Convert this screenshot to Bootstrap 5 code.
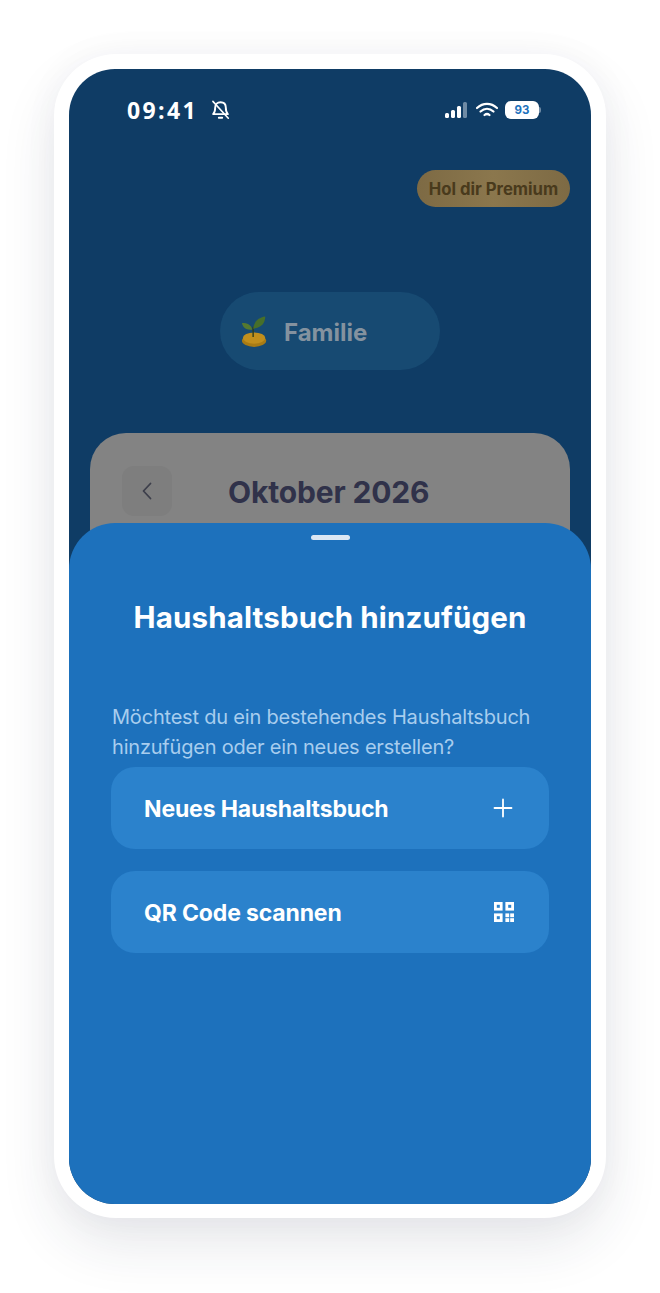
<!DOCTYPE html>
<html lang="de">
<head>
  <meta charset="UTF-8">
  <meta name="viewport" content="width=device-width, initial-scale=1.0">
  <title>Haushaltsbuch hinzufügen</title>
  <link href="https://cdn.jsdelivr.net/npm/bootstrap@5.3.3/dist/css/bootstrap.min.css" rel="stylesheet">
  <style>
    body { background: #fff; font-family: Inter, "Liberation Sans", sans-serif; }
    .stage { width: 660px; height: 1293px; padding: 54px 54px 0; overflow: hidden; }
    .phone {
      width: 552px; height: 1164px; padding: 15px 15px 14px; background: #fff; border-radius: 62px;
      box-shadow: 0 26px 56px rgba(40, 50, 70, .11), 0 0 36px rgba(40, 50, 70, .04);
    }
    .screen { height: 1135px; background: #0f3c65; border-radius: 46px; overflow: hidden; }
    .status-row { height: 84px; padding: 0 50px 2px 58px; color: #fff; }
    .status-left { gap: 13px; }
    .clock { font-family: "Open Sans", sans-serif; font-weight: 700; font-size: 23px; letter-spacing: 2.4px; line-height: 1; }
    .batt { width: 34px; height: 18px; border-radius: 6px; background: #fff; color: #1e72bd; font-size: 11.5px; font-weight: 700; line-height: 18px; text-align: center; }
    .batt-tip { width: 2px; height: 6px; background: #6f8ba5; border-radius: 0 2px 2px 0; }
    .signal { margin-right: 7px; }
    .wifi { margin-right: 6px; }
    .premium-row { padding: 17px 21px 0 0; }
    .premium { height: 37px; width: 153px; border-radius: 19px; font-size: 16.7px; font-weight: 700; color: #493a1c; line-height: 38px; text-align: center; background: linear-gradient(90deg, #7d6a44, #8b774d 50%, #7d6a44); }
    .family-pill { width: 220px; height: 78px; margin-top: 85px; border-radius: 39px; background: #174a72; color: #84929f; font-size: 24px; font-weight: 700; padding-left: 21px; gap: 15px; }
    .family-name { padding-top: 3px; }
    .month-card { height: 300px; margin: 63px 21px 0; border-radius: 36px 36px 0 0; background: #838383; padding: 33px 32px 0; }
    .back-box { width: 50px; height: 50px; border-radius: 12px; background: #7e7e7e; }
    .month-title { font-size: 30px; font-weight: 700; color: #30324a; line-height: 52px; margin-left: 56px; letter-spacing: -.15px; }
    .sheet { left: 0; right: 0; top: 454px; bottom: 0; background: #1d71bc; border-radius: 46px 46px 0 0; padding: 0 42px; }
    .grabber { width: 39px; height: 5px; border-radius: 3px; background: #dbe7f3; margin: 12px auto 0; }
    .sheet-title { font-size: 29.5px; font-weight: 700; color: #fff; margin: 57px 0 0; line-height: 40px; text-align: center; letter-spacing: .15px; white-space: nowrap; }
    .sheet-text { font-size: 20px; font-weight: 400; line-height: 30px; color: #a8cdee; margin: 65px 0 5px; padding-left: 1px; letter-spacing: -.2px; white-space: nowrap; }
    .sheet-btn { height: 82px; border-radius: 24px; background: #2b82cc; color: #fff; font-size: 23px; font-weight: 700; padding: 0 35px 0 33px; letter-spacing: -.15px; }
    .sheet-btn span { padding-top: 2px; }
    .plus-icon { margin-right: 1px; }
    .sheet-stack { gap: 22px; }
  </style>
</head>
<body>
  <div class="stage">
    <div class="phone">
      <div class="screen position-relative">

        <!-- Status bar -->
        <div class="status-row d-flex align-items-center justify-content-between">
          <div class="status-left d-flex align-items-center">
            <span class="clock">09:41</span>
            <svg width="19" height="22" viewBox="0 0 18 20" fill="none" stroke="#fff" stroke-width="1.800" stroke-linecap="round" stroke-linejoin="round">
              <path d="M4 7.500C4 4.500 6 2.600 9 2.600s5 1.900 5 4.900c0 3 .6 5 2 6.400H2c1.400-1.400 2-3.400 2-6.400z"/>
              <path d="M7.400 17.400h3.200"/>
              <path d="M1.800 1.800l14.600 16" stroke-width="1.500"/>
            </svg>
          </div>
          <div class="d-flex align-items-center">
            <svg width="23" height="18" viewBox="0 0 23 18" class="signal">
              <rect x="0" y="12" width="4" height="5" rx="1.500" fill="#fff"/>
              <rect x="6" y="9" width="4" height="8" rx="1.500" fill="#fff"/>
              <rect x="12" y="5" width="4" height="12" rx="1.500" fill="#fff"/>
              <rect x="18" y="1" width="4" height="16" rx="1.500" fill="#6f8ba5"/>
            </svg>
            <svg width="24" height="18" viewBox="0 0 24 18" fill="none" stroke="#fff" stroke-width="2.200" stroke-linecap="round" class="wifi">
              <path d="M2 7C8 1.500 16 1.500 22 7"/>
              <path d="M5.500 10.500c4-3.500 9-3.500 13 0"/>
              <path d="M9.500 14c1.500-1.200 3.500-1.200 5 0"/>
            </svg>
            <span class="batt">93</span><span class="batt-tip"></span>
          </div>
        </div>

        <!-- Premium -->
        <div class="premium-row d-flex justify-content-end">
          <div class="premium">Hol dir Premium</div>
        </div>

        <!-- Budget book switch -->
        <div class="family-pill d-flex align-items-center mx-auto">
          <svg width="28" height="33" viewBox="0 0 30 34">
            <ellipse cx="14" cy="27" rx="13" ry="6.500" fill="#a87b14"/>
            <ellipse cx="14" cy="24" rx="12" ry="6" fill="#c18f1c"/>
            <path d="M13 23V12" stroke="#2e3d1b" stroke-width="1.500"/>
            <path d="M13 14C14 6 19 2 26 1c0 7-4 12-13 13z" fill="#476f2a"/>
            <path d="M12 15C11 10 7 8 1 8c1 5 5 8 11 7z" fill="#55792f"/>
          </svg>
          <span class="family-name">Familie</span>
        </div>

        <!-- Calendar card behind the sheet -->
        <div class="month-card">
          <div class="d-flex">
            <div class="back-box d-flex align-items-center justify-content-center">
              <svg width="14" height="20" viewBox="0 0 14 20" fill="none" stroke="#3d3f4b" stroke-width="1.800" stroke-linecap="round" stroke-linejoin="round">
                <path d="M10.500 2.500L3.500 10l7 7.500"/>
              </svg>
            </div>
            <div class="month-title">Oktober 2026</div>
          </div>
        </div>

        <!-- Bottom sheet -->
        <div class="sheet position-absolute">
          <div class="grabber"></div>
          <h1 class="sheet-title">Haushaltsbuch hinzufügen</h1>
          <p class="sheet-text">Möchtest du ein bestehendes Haushaltsbuch<br>hinzufügen oder ein neues erstellen?</p>
          <div class="sheet-stack d-flex flex-column">
            <div class="sheet-btn d-flex align-items-center justify-content-between">
              <span>Neues Haushaltsbuch</span>
              <svg width="20" height="20" viewBox="0 0 20 20" stroke="#fff" stroke-width="1.800" stroke-linecap="round" class="plus-icon">
                <path d="M10 1.500v17M1.500 10h17"/>
              </svg>
            </div>
            <div class="sheet-btn d-flex align-items-center justify-content-between">
              <span>QR Code scannen</span>
              <svg width="20" height="20" viewBox="0 0 20 20" fill="none">
                <g stroke="#fff" stroke-width="2.800">
                  <rect x="1.400" y="1.400" width="5.800" height="5.800"/>
                  <rect x="12.800" y="1.400" width="5.800" height="5.800"/>
                  <rect x="1.400" y="12.800" width="5.800" height="5.800"/>
                </g>
                <g fill="#fff">
                  <rect x="11.400" y="11.400" width="3.800" height="3.800"/>
                  <rect x="16.200" y="11.400" width="3.800" height="3.800"/>
                  <rect x="11.400" y="16.200" width="3.800" height="3.800"/>
                  <rect x="16.200" y="16.200" width="3.800" height="3.800"/>
                </g>
              </svg>
            </div>
          </div>
        </div>

      </div>
    </div>
  </div>
  <script src="https://cdn.jsdelivr.net/npm/bootstrap@5.3.3/dist/js/bootstrap.bundle.min.js"></script>
</body>
</html>
